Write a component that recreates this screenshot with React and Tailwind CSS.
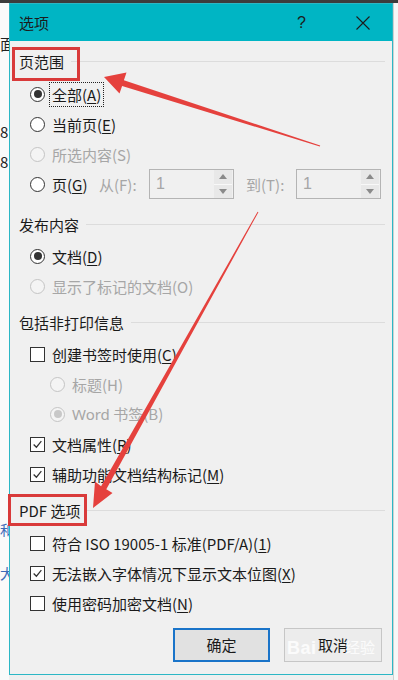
import React from 'react';

const font = "font-['Noto_Sans_CJK_SC','Microsoft_YaHei',sans-serif]";

const Radio = ({ checked, disabled }) => (
  <span
    className={`flex items-center justify-center w-[15px] h-[15px] rounded-full border shrink-0 ${
      disabled ? 'border-[#c4c4c4] bg-[#f4f4f4]' : 'border-[#333] bg-white'
    }`}
  >
    {checked && <span className={`w-[8px] h-[8px] rounded-full ${disabled ? 'bg-[#c8c8c8]' : 'bg-[#333]'}`} />}
  </span>
);

const Check = ({ checked }) => (
  <span className="flex items-center justify-center w-[15px] h-[15px] border border-[#333] bg-white shrink-0">
    {checked && (
      <svg width="11" height="11" viewBox="0 0 10 10">
        <polyline points="1.5,5 4,7.5 8.5,2" fill="none" stroke="#333" strokeWidth="1.1" />
      </svg>
    )}
  </span>
);

const Header = ({ children, className = '' }) => (
  <div className={`flex items-center h-[30px] pl-[9px] pr-[7px] ${className}`}>
    <span className="text-[15px] text-[#1a1a1a] leading-none">{children}</span>
    <span className="flex-1 h-px bg-[#dcdcdc] ml-[7px]" />
  </div>
);

const Row = ({ control, children, disabled, indent = false, focus = false }) => (
  <div className={`flex items-center h-[30px] ${indent ? 'pl-[40px]' : 'pl-[20px]'}`}>
    {control}
    <span
      className={`ml-[4px] text-[15px] leading-none px-[2px] py-[4px] ${
        disabled ? 'text-[#a6a6a6]' : 'text-[#1a1a1a]'
      } ${focus ? 'border border-dotted border-[#222]' : 'border border-transparent'}`}
    >
      {children}
    </span>
  </div>
);

const Spin = () => (
  <div className="flex w-[85px] h-[30px] border border-[#b4b4b4] bg-[#f0f0f0]">
    <span className="flex-1 flex items-center pl-[6px] text-[16px] text-[#a6a6a6] font-['Liberation_Sans',sans-serif]">1</span>
    <div className="flex flex-col w-[18px] mr-[1px]">
      <span className="flex-1 flex items-center justify-center bg-[#e8e8e8] border-b border-[#f8f8f8]">
        <svg width="8" height="5" viewBox="0 0 8 5"><polygon points="0,5 4,0 8,5" fill="#8a8a8a" /></svg>
      </span>
      <span className="flex-1 flex items-center justify-center bg-[#e8e8e8]">
        <svg width="8" height="5" viewBox="0 0 8 5"><polygon points="0,0 4,5 8,0" fill="#8a8a8a" /></svg>
      </span>
    </div>
  </div>
);

const U = ({ children }) => <span className="underline underline-offset-2">{children}</span>;

export default function App() {
  return (
    <div className={`relative w-[398px] h-[680px] overflow-hidden bg-[#efefef] ${font}`}>
      {/* background window behind the dialog */}
      <div className="absolute left-0 top-0 w-full h-[3px] bg-[#3c3c3c]" />
      <div className="absolute left-0 top-[3px] w-[9px] h-[677px] bg-[#fafafa]" />
      <span className="absolute left-0 top-[36px] text-[15px] text-[#222] leading-none">面</span>
      <span className="absolute left-0 top-[124px] text-[15px] text-[#222] leading-none">8</span>
      <span className="absolute left-0 top-[154px] text-[15px] text-[#222] leading-none">8</span>
      <span className="absolute left-0 top-[522px] text-[14px] text-[#3a6ab8] leading-none">和</span>
      <span className="absolute left-0 top-[566px] text-[14px] text-[#3a6ab8] leading-none">大</span>
      <div className="absolute left-[393px] top-[3px] w-[5px] h-[677px] bg-[#f7f7f7] border-l border-[#d0d0d0]" />

      {/* dialog */}
      <div className="absolute left-[9px] top-[3px] w-[384px] h-[672px] border border-[#2cb7c5] bg-[#f0f0f0] flex flex-col">
        <div className="flex items-center h-[37px] bg-[#00b5c4] pl-[9px]">
          <span className="text-[15px] text-[#1c1c1c] leading-none">选项</span>
          <span className="ml-auto text-[16px] text-[#1c1c1c] font-['Liberation_Sans',sans-serif]">?</span>
          <svg className="ml-[50px] mr-[22px]" width="14" height="14" viewBox="0 0 14 14">
            <path d="M0.5 0.5 L13.5 13.5 M13.5 0.5 L0.5 13.5" stroke="#1c1c1c" strokeWidth="1.1" />
          </svg>
        </div>

        <div className="flex flex-col pt-[5px]">
          <Header>页范围</Header>
          <div className="mt-[3px]">
            <Row control={<Radio checked />} focus>
              全部(<U>A</U>)
            </Row>
            <Row control={<Radio />}>
              当前页(<U>E</U>)
            </Row>
            <Row control={<Radio disabled />} disabled>
              所选内容(S)
            </Row>
            <div className="flex items-center h-[30px] pl-[20px]">
              <Radio />
              <span className="ml-[4px] w-[50px] px-[2px] text-[15px] leading-none text-[#1a1a1a] border border-transparent">
                页(<U>G</U>)
              </span>
              <span className="w-[50px] text-[15px] leading-none text-[#a6a6a6]">从(F):</span>
              <Spin />
              <span className="ml-[12px] w-[50px] text-[15px] leading-none text-[#a6a6a6]">到(T):</span>
              <Spin />
            </div>
          </div>

          <Header className="mt-[10px]">发布内容</Header>
          <div className="mt-[2px]">
            <Row control={<Radio checked />}>
              文档(<U>D</U>)
            </Row>
            <Row control={<Radio disabled />} disabled>
              显示了标记的文档(O)
            </Row>
          </div>

          <Header className="mt-[6px]">包括非打印信息</Header>
          <div className="mt-[2px]">
            <Row control={<Check />}>
              创建书签时使用(<U>C</U>)
            </Row>
            <Row control={<Radio disabled />} disabled indent>
              标题(H)
            </Row>
            <Row control={<Radio checked disabled />} disabled indent>
              <span className="font-['Noto_Sans','Noto_Sans_CJK_SC',sans-serif]">Word</span> 书签(B)
            </Row>
            <Row control={<Check checked />}>
              文档属性(<U>R</U>)
            </Row>
            <Row control={<Check checked />}>
              辅助功能文档结构标记(<U>M</U>)
            </Row>
          </div>

          <Header className="mt-[6px]">PDF 选项</Header>
          <div className="mt-[3px]">
            <Row control={<Check />}>
              符合 ISO 19005-1 标准(PDF/A)(<U>1</U>)
            </Row>
            <Row control={<Check checked />}>
              无法嵌入字体情况下显示文本位图(<U>X</U>)
            </Row>
            <Row control={<Check />}>
              使用密码加密文档(<U>N</U>)
            </Row>
          </div>

          <div className="flex justify-end gap-[14px] pr-[10px] mt-[10px]">
            <button className="w-[97px] h-[34px] border-2 border-[#1a74c9] bg-[#e1e1e1] text-[15px] text-[#1a1a1a]">
              确定
            </button>
            <button className="relative w-[98px] h-[34px] border border-[#c6c6c6] bg-[#ececec] text-[15px] text-[#1a1a1a]">
              取消
              <span className="absolute left-[2px] top-[6px] text-[18px] font-bold text-white/80 font-['Liberation_Sans',sans-serif] tracking-wide">
                Bai
              </span>
              <span className="absolute right-[6px] top-[7px] text-[15px] text-white/80">经验</span>
            </button>
          </div>
        </div>
      </div>

      {/* red annotations */}
      <div className="absolute left-[12px] top-[47px] w-[68px] h-[34px] border-[3px] border-[#d93a3a]" />
      <div className="absolute left-[8px] top-[494px] w-[79px] h-[32px] border-[3px] border-[#d93a3a]" />
      <svg className="absolute left-0 top-0 pointer-events-none" width="398" height="680" viewBox="0 0 398 680">
        <polygon
          points="320.2,145.5 123.9,80.2 126.5,72.5 104,77 119.5,93.5 122.1,86 319.8,146.5"
          fill="#e5413d"
        />
        <polygon
          points="258.4,212.2 106.3,489.3 112.5,493 93,508 95,481.5 101.1,486.3 257.6,211.8"
          fill="#e5413d"
        />
      </svg>
    </div>
  );
}
